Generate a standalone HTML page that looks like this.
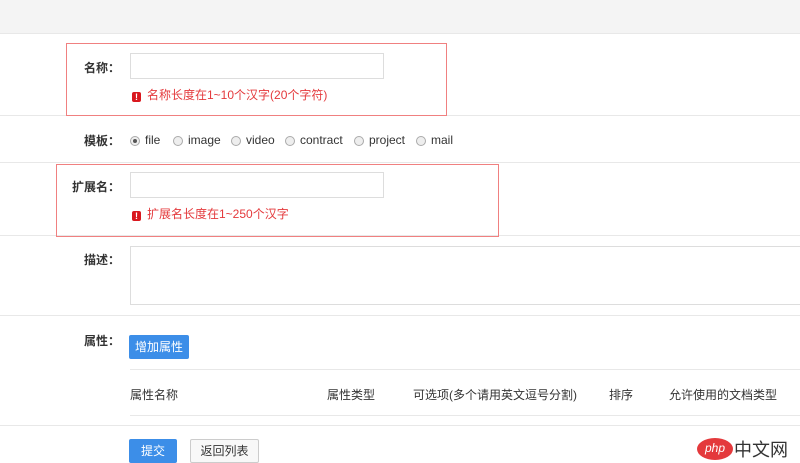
<!DOCTYPE html><html><head><meta charset="utf-8"><style>
body{margin:0;width:800px;height:453px;overflow:hidden;background:#fff;font-family:"Liberation Sans","Noto Sans CJK SC",sans-serif;font-size:12px;color:#333;position:relative}
.a{position:absolute}
.hl{position:absolute;left:0;width:800px;height:1px;background:#e8e8e8}
.lab{position:absolute;font-weight:bold;font-size:12px;color:#333}
.inp{position:absolute;border:1px solid #ddd;background:#fff;box-sizing:border-box}
.err{position:absolute;color:#e4393c;font-size:12px}
.err i{display:inline-block;width:9px;height:10px;background:#d9181f;color:#fff;font-style:normal;font-weight:bold;font-size:9px;line-height:10px;text-align:center;border-radius:2px;margin-right:6px;vertical-align:-1px}
.box{position:absolute;border:1px solid #f08080}
.r{display:inline-block;width:10px;height:10px;border:1px solid #aaa;border-radius:50%;background:#eee;vertical-align:-2px;margin-right:5px;box-sizing:border-box;position:relative}
.rad{position:absolute;top:133px;font-size:12px}
</style></head><body>
<div class="a" style="left:0;top:0;width:800px;height:33px;background:#f4f4f4"></div>
<div class="hl" style="top:33px"></div>
<div class="hl" style="top:115px"></div>
<div class="hl" style="top:162px"></div>
<div class="hl" style="top:235px"></div>
<div class="hl" style="top:315px"></div>
<div class="hl" style="top:425px"></div>
<div class="box" style="left:66px;top:43px;width:379px;height:71px"></div>
<div class="lab" style="left:84px;top:59px">名称：</div>
<div class="inp" style="left:130px;top:53px;width:254px;height:26px"></div>
<div class="err" style="left:132px;top:86px"><i>!</i>名称长度在1~10个汉字(20个字符)</div>
<div class="lab" style="left:84px;top:132px">模板：</div>
<div class="rad" style="left:130px"><span class="r"><span class="a" style="left:2px;top:2px;width:4px;height:4px;background:#555;border-radius:50%"></span></span>file</div>
<div class="rad" style="left:173px"><span class="r"></span>image</div>
<div class="rad" style="left:231px"><span class="r"></span>video</div>
<div class="rad" style="left:285px"><span class="r"></span>contract</div>
<div class="rad" style="left:354px"><span class="r"></span>project</div>
<div class="rad" style="left:416px"><span class="r"></span>mail</div>
<div class="box" style="left:56px;top:164px;width:441px;height:71px"></div>
<div class="lab" style="left:72px;top:178px">扩展名：</div>
<div class="inp" style="left:130px;top:172px;width:254px;height:26px"></div>
<div class="err" style="left:132px;top:205px"><i>!</i>扩展名长度在1~250个汉字</div>
<div class="lab" style="left:84px;top:251px">描述：</div>
<div class="inp" style="left:130px;top:246px;width:680px;height:59px"></div>
<div class="lab" style="left:84px;top:332px">属性：</div>
<div class="a" style="left:129px;top:335px;width:60px;height:24px;background:#3c8ee8;color:#fff;border-radius:2px;text-align:center;line-height:24px">增加属性</div>
<div class="a" style="left:130px;top:369px;width:670px;height:1px;background:#e8e8e8"></div>
<div class="a" style="left:130px;top:386px">属性名称</div>
<div class="a" style="left:327px;top:386px">属性类型</div>
<div class="a" style="left:413px;top:386px">可选项(多个请用英文逗号分割)</div>
<div class="a" style="left:609px;top:386px">排序</div>
<div class="a" style="left:669px;top:386px">允许使用的文档类型</div>
<div class="a" style="left:130px;top:415px;width:670px;height:1px;background:#e8e8e8"></div>
<div class="a" style="left:129px;top:439px;width:48px;height:24px;background:#3c8ee8;color:#fff;border-radius:2px;text-align:center;line-height:24px">提交</div>
<div class="a" style="left:190px;top:439px;width:69px;height:24px;border:1px solid #ccc;box-sizing:border-box;border-radius:2px;text-align:center;line-height:22px;background:#f8f8f8">返回列表</div>
<div class="a" style="left:697px;top:438px;width:36px;height:22px;background:#e4393c;border-radius:50%;color:#fff;font-style:italic;font-size:12px;text-align:center;line-height:20px">php</div>
<div class="a" style="left:734px;top:436px;font-size:18px;color:#333">中文网</div>
</body></html>
